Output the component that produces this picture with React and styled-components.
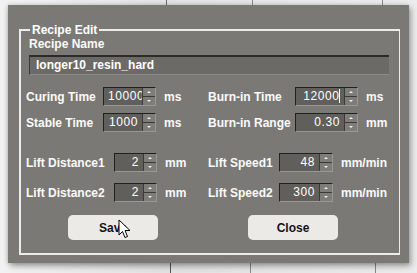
import React from 'react'
import styled, { createGlobalStyle } from 'styled-components'

const GlobalStyle = createGlobalStyle`
  html, body {
    margin: 0;
    padding: 0;
    background: #ebebeb;
    font-family: "Liberation Sans", Arial, sans-serif;
  }
`

const Desktop = styled.div`
  width: 417px;
  height: 273px;
  box-sizing: border-box;
  padding: 5px 8px 10px 8px;
  background:
    linear-gradient(#6a6a6a, #6a6a6a) 166px 0 / 1px 5px no-repeat,
    linear-gradient(#8a8a8a, #8a8a8a) 252px 0 / 1px 5px no-repeat,
    linear-gradient(#8a8a8a, #8a8a8a) 382px 0 / 1px 5px no-repeat,
    linear-gradient(#555, #555) 170px 263px / 1px 10px no-repeat,
    linear-gradient(#888, #888) 250px 263px / 1px 10px no-repeat,
    linear-gradient(#888, #888) 375px 263px / 1px 10px no-repeat,
    linear-gradient(90deg, #f2f2f2, #e2e2e2 40%, #ececec);
  overflow: hidden;
`

const Dialog = styled.div`
  width: 401px;
  height: 258px;
  box-sizing: border-box;
  padding: 18px 9px 8px 11px;
  background: #7b7975;
  box-shadow: 2px 3px 6px rgba(0, 0, 0, 0.35), -1px 0 4px rgba(0, 0, 0, 0.15);
  display: flex;
`

const Frame = styled.fieldset`
  flex: 1;
  margin: 0;
  padding: 0 6px 0 5px;
  border: 2px solid #ececec;
  border-right-width: 1px;
  display: flex;
  flex-direction: column;
  min-width: 0;
`

const FrameTitle = styled.legend`
  margin-left: 4px;
  padding: 0 2px;
  font-size: 12px;
  line-height: 14px;
  font-weight: bold;
  color: #fff;
`

const NameLabel = styled.div`
  margin: 0 0 0 3px;
  font-size: 12px;
  line-height: 14px;
  font-weight: bold;
  color: #fafafa;
`

const NameInput = styled.div`
  margin: 4px 0 0 3px;
  width: 360px;
  height: 20px;
  box-sizing: border-box;
  padding: 0 6px;
  background: #6b6a66;
  border-top: 2px solid #2c2b29;
  border-left: 1px solid #3a3937;
  border-bottom: 1px solid #8c8a86;
  font-size: 12px;
  line-height: 17px;
  font-weight: bold;
  color: #fff;
`

const Row = styled.div`
  display: flex;
  height: 19px;
  margin-top: ${p => p.$top}px;
`

const Field = styled.div`
  display: flex;
  align-items: center;
  width: ${p => p.$width || 'auto'};
`

const Label = styled.span`
  width: ${p => p.$width}px;
  flex: none;
  font-size: 12px;
  font-weight: bold;
  color: #fafafa;
  white-space: nowrap;
`

const Unit = styled.span`
  margin-left: 8px;
  font-size: 12px;
  font-weight: bold;
  color: #fafafa;
  white-space: nowrap;
`

const SpinBox = styled.div`
  width: ${p => p.$width}px;
  height: 19px;
  box-sizing: border-box;
  display: flex;
  background: #615f5b;
  border: 1px solid;
  border-color: #222120 #9a9894 #9a9894 #222120;
`

const Value = styled.div`
  flex: 1;
  min-width: 0;
  overflow: hidden;
  white-space: nowrap;
  text-align: right;
  padding: 0 4px;
  font-size: 12px;
  line-height: 17px;
  letter-spacing: 0.6px;
  color: #fff;
`

const Caret = styled.span`
  border-right: 1px solid #fff;
  margin-left: -0.5px;
`

const Arrows = styled.div`
  width: 12px;
  flex: none;
  display: flex;
  flex-direction: column;
  background: #7f7d79;
  border-left: 1px solid #3b3a38;
`

const ArrowHalf = styled.div`
  flex: 1;
  display: flex;
  align-items: center;
  justify-content: center;
  border-top: ${p => (p.$down ? '1px solid #3b3a38' : 'none')};

  &::after {
    content: '';
    border-left: 2px solid transparent;
    border-right: 2px solid transparent;
    ${p => (p.$down ? 'border-top: 2px solid #f2f2f2;' : 'border-bottom: 2px solid #f2f2f2;')}
  }
`

const Buttons = styled.div`
  display: flex;
  gap: 90px;
  margin: 13px 0 0 42px;
`

const Button = styled.div`
  position: relative;
  width: 90px;
  height: 25px;
  border-radius: 5px;
  background: #ebeae7;
  display: flex;
  align-items: center;
  justify-content: center;
  font-size: 12px;
  font-weight: bold;
  color: #141414;
`

const Pointer = styled.svg`
  position: absolute;
  left: 50px;
  top: 4px;
`

function Spin({ width, value, caret }) {
  return (
    <SpinBox $width={width}>
      <Value>
        {value}
        {caret && <Caret />}
      </Value>
      <Arrows>
        <ArrowHalf />
        <ArrowHalf $down />
      </Arrows>
    </SpinBox>
  )
}

function Entry({ label, labelWidth, boxWidth, value, unit, caret, width }) {
  return (
    <Field $width={width}>
      <Label $width={labelWidth}>{label}</Label>
      <Spin width={boxWidth} value={value} caret={caret} />
      <Unit>{unit}</Unit>
    </Field>
  )
}

const rows = [
  {
    top: 12,
    left: { label: 'Curing Time', labelWidth: 77, boxWidth: 53, value: '10000', unit: 'ms' },
    right: { label: 'Burn-in Time', labelWidth: 87, boxWidth: 63, value: '12000', unit: 'ms', caret: true },
  },
  {
    top: 7,
    left: { label: 'Stable Time', labelWidth: 77, boxWidth: 53, value: '1000', unit: 'ms' },
    right: { label: 'Burn-in Range', labelWidth: 87, boxWidth: 63, value: '0.30', unit: 'mm' },
  },
  {
    top: 21,
    left: { label: 'Lift Distance1', labelWidth: 88, boxWidth: 43, value: '2', unit: 'mm' },
    right: { label: 'Lift Speed1', labelWidth: 71, boxWidth: 54, value: '48', unit: 'mm/min' },
  },
  {
    top: 11,
    left: { label: 'Lift Distance2', labelWidth: 88, boxWidth: 43, value: '2', unit: 'mm' },
    right: { label: 'Lift Speed2', labelWidth: 71, boxWidth: 54, value: '300', unit: 'mm/min' },
  },
]

export default function App() {
  return (
    <>
      <GlobalStyle />
      <Desktop>
        <Dialog>
          <Frame>
            <FrameTitle>Recipe Edit</FrameTitle>
            <NameLabel>Recipe Name</NameLabel>
            <NameInput>longer10_resin_hard</NameInput>
            {rows.map((row, i) => (
              <Row key={i} $top={row.top}>
                <Entry {...row.left} width="182px" />
                <Entry {...row.right} />
              </Row>
            ))}
            <Buttons>
              <Button>
                Save
                <Pointer width="14" height="20" viewBox="0 0 14 20">
                  <path
                    d="M1 1 L1 16 L4.5 12.5 L7 18.5 L9.5 17.5 L7 11.5 L12 11.5 Z"
                    fill="#fff"
                    stroke="#000"
                    strokeWidth="1"
                    strokeLinejoin="miter"
                  />
                </Pointer>
              </Button>
              <Button>Close</Button>
            </Buttons>
          </Frame>
        </Dialog>
      </Desktop>
    </>
  )
}
